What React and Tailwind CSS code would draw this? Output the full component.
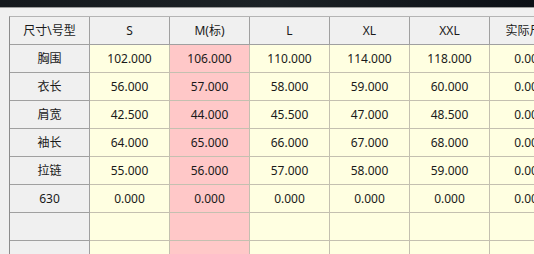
import React from "react";

const cols = ["S", "M(标)", "L", "XL", "XXL", "实际尺寸"];
const rows = [
  ["胸围", "102.000", "106.000", "110.000", "114.000", "118.000", "0.000"],
  ["衣长", "56.000", "57.000", "58.000", "59.000", "60.000", "0.000"],
  ["肩宽", "42.500", "44.000", "45.500", "47.000", "48.500", "0.000"],
  ["袖长", "64.000", "65.000", "66.000", "67.000", "68.000", "0.000"],
  ["拉链", "55.000", "56.000", "57.000", "58.000", "59.000", "0.000"],
  ["630", "0.000", "0.000", "0.000", "0.000", "0.000", "0.000"],
  ["", "", "", "", "", "", ""],
  ["", "", "", "", "", "", ""],
];

export default function App() {
  return (
    <div
      className="w-[534px] h-[254px] overflow-hidden bg-[#f0f0f0] text-[12px] text-[#1a1a1a]"
      style={{ fontFamily: '"Noto Sans", "Noto Sans CJK SC", sans-serif' }}
    >
      <div className="h-[7px] bg-gradient-to-r from-[#15191d] via-[#1c2226] to-[#0c1016]" />
      <div className="h-px bg-[#9c9c9c]" />
      <div className="pl-[9px] pt-[8px]">
        <div className="w-max border-l border-t border-l-[#8c8c8c] border-t-[#b4b4b4]">
          <div className="flex">
            <div className="w-[80px] h-[28px] shrink-0 flex items-center justify-center bg-[#f0f0f0] border-r border-b border-[#a0a0a0]">
              尺寸\号型
            </div>
            {cols.map((c) => (
              <div
                key={c}
                className="w-[80px] h-[28px] shrink-0 flex items-center justify-center bg-[#f0f0f0] border-r border-b border-[#a0a0a0]"
              >
                {c}
              </div>
            ))}
          </div>
          {rows.map((r, i) => (
            <div key={i} className="flex">
              <div className="w-[80px] h-[28px] shrink-0 flex items-center justify-center bg-[#f0f0f0] border-r border-b border-[#a0a0a0]">
                {r[0]}
              </div>
              {r.slice(1).map((v, j) => (
                <div
                  key={j}
                  className={
                    j === 1
                      ? "w-[80px] h-[28px] shrink-0 flex items-center justify-center bg-[#ffc8c8] border-r border-b border-[#c4c0b0]"
                      : "w-[80px] h-[28px] shrink-0 flex items-center justify-center bg-[#ffffe1] border-r border-b border-[#c4c0b0]"
                  }
                >
                  {v}
                </div>
              ))}
            </div>
          ))}
        </div>
      </div>
    </div>
  );
}
